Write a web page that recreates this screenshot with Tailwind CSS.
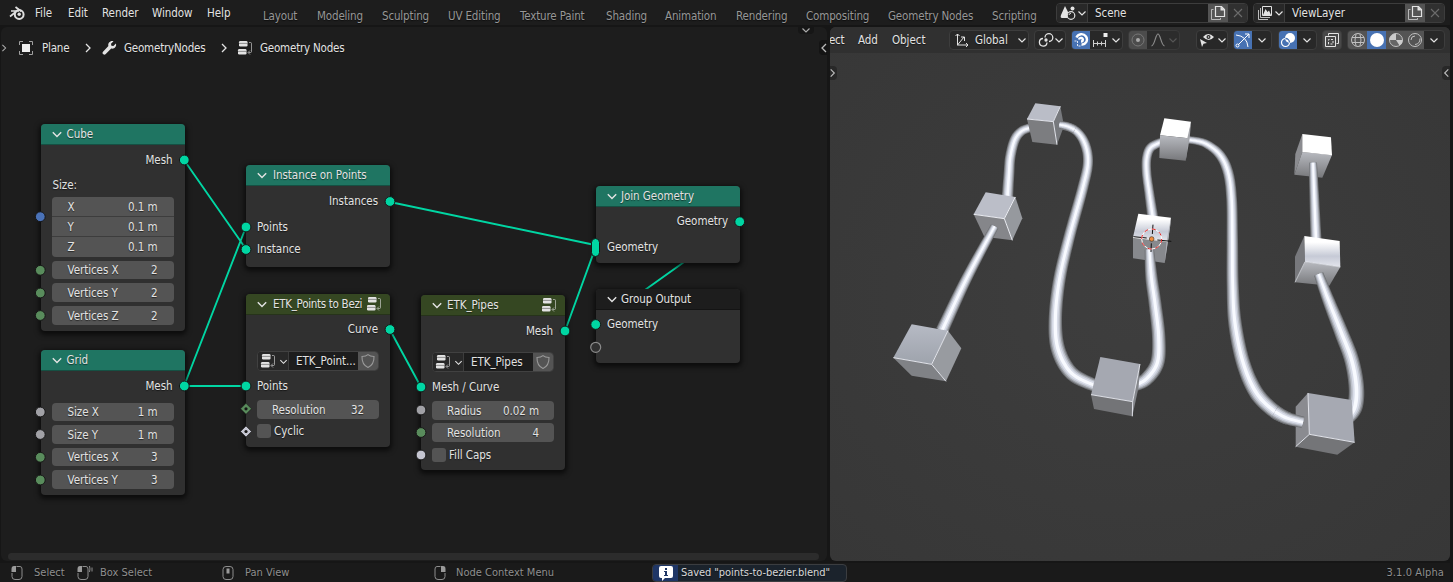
<!DOCTYPE html>
<html lang="en">
<head>
<meta charset="utf-8">
<title>Blender</title>
<script src="https://cdn.jsdelivr.net/npm/@tailwindcss/browser@4"></script>
</head>
<body class="w-[1453px] h-[582px] overflow-hidden bg-[#161616] flex flex-col font-['DejaVu_Sans_Condensed','DejaVu_Sans',sans-serif] text-[11.5px] leading-[18px] tracking-[-0.05px] text-[#e3e3e3] whitespace-nowrap [text-shadow:0_1px_1px_#0008]">
<svg class="hidden">
  <symbol id="chev" viewBox="0 0 10 10"><path d="M1.500 3.500 5 7 8.500 3.500" fill="none" stroke="currentColor" stroke-width="1.200"/></symbol>
  <symbol id="right" viewBox="0 0 10 10"><path d="M3 1 7 5 3 9" fill="none" stroke="currentColor" stroke-width="1.300"/></symbol>
  <symbol id="tree" viewBox="0 0 16 16"><rect x="2" y="1" width="8.500" height="5.500" rx="1.200" fill="currentColor"/><rect x="1" y="9" width="8.500" height="5.500" rx="1.200" fill="currentColor"/><path d="M2 3.400h8.500M1 11.400h8.500" stroke="#555" stroke-width=".6"/><path d="M12 2.500h1.500q1 0 1 1v8q0 1-1 1H11.500M13 10.500l-2 2 2 2" fill="none" stroke="currentColor" opacity=".6"/></symbol>
  <symbol id="shield" viewBox="0 0 16 16"><path d="M8 1.600C6.500 3 4.500 3.500 2 3.500 1.800 9 3.800 12.500 8 14.500c4.200-2 6.200-5.500 6-11-2.500 0-4.500-.5-6-1.900z" fill="none" stroke="#999" stroke-width="1.100"/></symbol>
  <symbol id="copy" viewBox="0 0 16 16"><path d="M5.500 1.500h6l3 3v7h-9z" fill="none" stroke="currentColor" stroke-width="1.200"/><path d="M10.500 1 15 5.500h-4.500z" fill="currentColor"/><path d="M3.500 4.500h-2v10h9v-1.500" fill="none" stroke="currentColor" opacity=".7"/></symbol>
  <symbol id="x" viewBox="0 0 16 16"><path d="m4 4 8 8m0-8-8 8" fill="none" stroke="#6b6b6b" stroke-width="1.100"/></symbol>
  <symbol id="mouse" viewBox="0 0 16 16"><path d="M7.500 1.500H11Q13 1.500 13 4v7.500Q13 14.500 10 14.500H6Q3 14.500 3 11.500V8" fill="none" stroke="#8d8d8d"/><path d="M7 1v6H2.500V4Q2.500 1 5 1z" fill="#9a9a9a"/></symbol>
</svg>

<!-- Top bar -->
<header class="flex h-[25px] shrink-0 bg-[#1d1d1d] w-[1450px]">
  <svg class="ml-[9px] mt-[5px] w-4 h-4 shrink-0" viewBox="0 0 16 16" fill="none" stroke="#dedede"><circle cx="10.200" cy="9.500" r="4.400" stroke-width="2"/><circle cx="10.200" cy="9.300" r="1.700" fill="#dedede" stroke="none"/><path d="M1 11.500 8.500 5.500M2 6h8M6.500 2l6 4.500" stroke-width="1.700"/></svg>
  <nav class="flex ml-[10px] pt-[4px] w-[228px] shrink-0">
    <span class="w-[33px]">File</span><span class="w-[34px]">Edit</span><span class="w-[50px]">Render</span><span class="w-[55px]">Window</span><span>Help</span>
  </nav>
  <nav class="flex pt-[7px] w-[793px] shrink-0 text-[#979797] tracking-[-0.15px]">
    <span class="w-[54px]">Layout</span><span class="w-[65px]">Modeling</span><span class="w-[66px]">Sculpting</span><span class="w-[72px]">UV Editing</span><span class="w-[86px]">Texture Paint</span><span class="w-[59px]">Shading</span><span class="w-[71px]">Animation</span><span class="w-[70px]">Rendering</span><span class="w-[82px]">Compositing</span><span class="w-[104px]">Geometry Nodes</span><span>Scripting</span>
  </nav>
  <div class="flex gap-[5px] mt-[3px]">
    <div class="flex w-[192px] h-[20px] rounded-[4px] border border-[#3d3d3d] bg-[#1d1d1d] overflow-hidden">
      <div class="w-[31px] bg-[#282828] flex items-center border-r border-[#3d3d3d] shrink-0"><svg class="w-[17px] h-4 ml-[3px]" viewBox="0 0 17 16" fill="#e3e3e3"><path d="M5 1 9 9Q8 11 8.500 13H2Q0 13 1 10z"/><circle cx="12.500" cy="3.500" r="2"/><circle cx="11" cy="10.500" r="3.800" fill="#282828" stroke="#e3e3e3" stroke-width="1.200"/><path d="M9 10q.3-1.700 2-1.800" fill="none" stroke="#e3e3e3"/></svg><svg class="w-[10px] h-[10px]"><use href="#chev"/></svg></div>
      <span class="w-[120px] pl-[7px] shrink-0">Scene</span>
      <span class="w-[20px] bg-[#545454] flex items-center justify-center shrink-0"><svg class="w-4 h-4"><use href="#copy"/></svg></span>
      <span class="w-[20px] bg-[#303030] flex items-center justify-center shrink-0"><svg class="w-4 h-4"><use href="#x"/></svg></span>
    </div>
    <div class="flex w-[192px] h-[20px] rounded-[4px] border border-[#3d3d3d] bg-[#1d1d1d] overflow-hidden">
      <div class="w-[31px] bg-[#282828] flex items-center border-r border-[#3d3d3d] shrink-0"><svg class="w-4 h-4 ml-[3px]" viewBox="0 0 16 16" fill="none" stroke="#e3e3e3"><path d="M5.500 1.500h9v9h-9z"/><path d="M3.500 3v9.500H13M1.500 5v9.500H11" opacity=".8"/><path d="m6 10 2.500-6 2 3 1.500-1.500 2 4.500z" fill="#e3e3e3" stroke="none"/></svg><svg class="w-[10px] h-[10px] ml-px"><use href="#chev"/></svg></div>
      <span class="w-[120px] pl-[7px] shrink-0">ViewLayer</span>
      <span class="w-[20px] bg-[#545454] flex items-center justify-center shrink-0"><svg class="w-4 h-4"><use href="#copy"/></svg></span>
      <span class="w-[20px] bg-[#303030] flex items-center justify-center shrink-0"><svg class="w-4 h-4"><use href="#x"/></svg></span>
    </div>
  </div>
</header>

<main class="flex mt-[2px] h-[534px] shrink-0">
  <!-- Node editor; the canvas inside uses window coordinates -->
  <section class="relative w-[826px] ml-px h-[534px] shrink-0 rounded-[6px] bg-[#1d1d1d] overflow-hidden">
    <div class="flex items-center h-[42px] tracking-[-0.2px]">
      <svg class="w-[8px] h-[10px] -ml-px shrink-0 text-[#b0b0b0]"><use href="#right"/></svg>
      <svg class="w-4 h-4 ml-[10px] shrink-0" viewBox="0 0 16 16"><rect x="4" y="4" width="8" height="8" fill="#eee"/><path d="M1.500 5V1.500H5M11 1.500h3.500V5M14.500 11v3.500H11M5 14.500H1.500V11" fill="none" stroke="#a0a0a0"/></svg>
      <span class="ml-[8px] w-[41px]">Plane</span>
      <svg class="w-[10px] h-[10px]"><use href="#right"/></svg>
      <svg class="w-4 h-4 ml-[8px]" viewBox="0 0 16 16" fill="#e3e3e3"><path d="M12.500 1.200 10 3.700l.4 2 2 .4 2.500-2.500c1 3-1.500 5.700-4.700 5L4.500 14.200c-1.500 1.500-4-.8-2.500-2.400L7.400 6C6.500 3 9.500.2 12.500 1.200z"/></svg>
      <span class="ml-[7px] w-[95px]">GeometryNodes</span>
      <svg class="w-[10px] h-[10px]"><use href="#right"/></svg>
      <svg class="w-4 h-4 ml-[8px]"><use href="#tree"/></svg>
      <span class="ml-[7px]">Geometry Nodes</span>
    </div>
    <div class="absolute left-[797px] -top-[1px] w-[16px] h-[8px] rounded-b bg-[#161616] text-[#aaa]"><svg class="w-[10px] h-[10px] ml-[3px] -mt-[1px]"><use href="#chev"/></svg></div>
    <div class="absolute left-[818px] top-[13px] w-[9px] h-[15px] rounded-l bg-[#141414] text-[#bbb]"><svg class="w-[10px] h-[10px] mt-[3px] -scale-x-100"><use href="#right"/></svg></div>
    <div class="absolute left-[7px] top-[526px] w-[811px] h-[7px] rounded-full bg-[#2c2c2c]"></div>

    <div class="absolute -left-px -top-[27px] w-[828px] h-[561px]">
      <svg class="absolute inset-0 w-[828px] h-[561px]" fill="none" stroke="#00d6a3" stroke-width="1.900"><path d="M184 160 246 249M184 386 246 227M184 386H246M390 202 595 245M390 330 421 387M565 331 595 249M740 222 596 325"/></svg>

      <!-- Cube -->
      <article class="absolute left-[40.500px] top-[124px] w-[144px] h-[207px] rounded-[4px] bg-[#303030] shadow-[0_2px_5px_2px_#0009]">
        <h2 class="flex items-center h-[21px] rounded-t-[4px] bg-[#1f7562] border-b border-[#155043] pl-[10px]"><svg class="w-[12px] h-[12px] mr-[4px]"><use href="#chev"/></svg>Cube</h2>
        <div class="flex justify-end mt-[6px] pr-[12px]">Mesh</div>
        <div class="mt-[7px] pl-[12px]">Size:</div>
        <div class="mt-[3px] mx-[11px] flex flex-col gap-px rounded-[4px] overflow-hidden bg-[#3d3d3d]">
          <div class="flex justify-between items-center h-[19px] px-[16px] bg-[#545454]"><span>X</span><span>0.1 m</span></div>
          <div class="flex justify-between items-center h-[19px] px-[16px] bg-[#545454]"><span>Y</span><span>0.1 m</span></div>
          <div class="flex justify-between items-center h-[20px] px-[16px] bg-[#545454]"><span>Z</span><span>0.1 m</span></div>
        </div>
        <div class="flex justify-between items-center h-[18px] mt-[4px] mx-[11px] px-[16px] rounded-[4px] bg-[#545454]"><span>Vertices X</span><span>2</span></div>
        <div class="flex justify-between items-center h-[19px] mt-[4px] mx-[11px] px-[16px] rounded-[4px] bg-[#545454]"><span>Vertices Y</span><span>2</span></div>
        <div class="flex justify-between items-center h-[19px] mt-[4px] mx-[11px] px-[16px] rounded-[4px] bg-[#545454]"><span>Vertices Z</span><span>2</span></div>
      </article>

      <!-- Grid -->
      <article class="absolute left-[40.500px] top-[350px] w-[144px] h-[145px] rounded-[4px] bg-[#303030] shadow-[0_2px_5px_2px_#0009]">
        <h2 class="flex items-center h-[21px] rounded-t-[4px] bg-[#1f7562] border-b border-[#155043] pl-[10px]"><svg class="w-[12px] h-[12px] mr-[4px]"><use href="#chev"/></svg>Grid</h2>
        <div class="flex justify-end mt-[6px] pr-[12px]">Mesh</div>
        <div class="flex justify-between items-center h-[18px] mt-[8px] mx-[11px] px-[16px] rounded-[4px] bg-[#545454]"><span>Size X</span><span>1 m</span></div>
        <div class="flex justify-between items-center h-[19px] mt-[4px] mx-[11px] px-[16px] rounded-[4px] bg-[#545454]"><span>Size Y</span><span>1 m</span></div>
        <div class="flex justify-between items-center h-[18px] mt-[4px] mx-[11px] px-[16px] rounded-[4px] bg-[#545454]"><span>Vertices X</span><span>3</span></div>
        <div class="flex justify-between items-center h-[19px] mt-[4px] mx-[11px] px-[16px] rounded-[4px] bg-[#545454]"><span>Vertices Y</span><span>3</span></div>
      </article>

      <!-- Instance on Points -->
      <article class="absolute left-[246px] top-[165px] w-[144px] h-[102px] rounded-[4px] bg-[#303030] shadow-[0_2px_5px_2px_#0009]">
        <h2 class="flex items-center h-[21px] rounded-t-[4px] bg-[#1f7562] border-b border-[#155043] pl-[10px]"><svg class="w-[12px] h-[12px] mr-[5px]"><use href="#chev"/></svg>Instance on Points</h2>
        <div class="flex justify-end mt-[6px] pr-[12px]">Instances</div>
        <div class="mt-[8px] pl-[11px]">Points</div>
        <div class="mt-[4px] pl-[11px]">Instance</div>
      </article>

      <!-- ETK_Points to Bezier -->
      <article class="absolute left-[246px] top-[294px] w-[144px] h-[153px] rounded-[4px] bg-[#303030] shadow-[0_2px_5px_2px_#0009]">
        <h2 class="flex items-center h-[21px] rounded-t-[4px] bg-[#354722] border-b border-[#26331a] pl-[10px]"><svg class="w-[12px] h-[12px] mr-[5px] shrink-0"><use href="#chev"/></svg><span class="w-[93px] tracking-[-0.3px] shrink-0">ETK_Points to Bezi</span><svg class="w-4 h-4 shrink-0"><use href="#tree"/></svg></h2>
        <div class="flex justify-end mt-[5px] pr-[12px]">Curve</div>
        <div class="flex h-[20px] mt-[13px] mx-[11px] rounded-[4px] border border-[#414141] bg-[#1d1d1d] overflow-hidden">
          <div class="flex items-center w-[31px] bg-[#282828] border-r border-[#3d3d3d] pl-[2px] shrink-0"><svg class="w-4 h-4"><use href="#tree"/></svg><svg class="w-[9px] h-[9px] ml-[3px]"><use href="#chev"/></svg></div>
          <span class="pl-[7px] w-[69px] shrink-0">ETK_Point...</span>
          <span class="flex-1 flex items-center justify-center bg-[#545454]"><svg class="w-4 h-4"><use href="#shield"/></svg></span>
        </div>
        <div class="mt-[6px] pl-[11px]">Points</div>
        <div class="flex justify-between items-center h-[19px] mt-[5px] mx-[11px] px-[15px] rounded-[4px] bg-[#545454]"><span>Resolution</span><span>32</span></div>
        <div class="flex items-center mt-[3px] pl-[11px]"><i class="w-[14px] h-[14px] rounded-[3px] bg-[#545454] mr-[3px]"></i>Cyclic</div>
      </article>

      <!-- ETK_Pipes -->
      <article class="absolute left-[421px] top-[295px] w-[144px] h-[175px] rounded-[4px] bg-[#303030] shadow-[0_2px_5px_2px_#0009]">
        <h2 class="flex items-center h-[21px] rounded-t-[4px] bg-[#354722] border-b border-[#26331a] pl-[10px]"><svg class="w-[12px] h-[12px] mr-[4px] shrink-0"><use href="#chev"/></svg><span class="w-[94px] shrink-0">ETK_Pipes</span><svg class="w-4 h-4 shrink-0"><use href="#tree"/></svg></h2>
        <div class="flex justify-end mt-[6px] pr-[12px]">Mesh</div>
        <div class="flex h-[20px] mt-[12px] mx-[11px] rounded-[4px] border border-[#414141] bg-[#1d1d1d] overflow-hidden">
          <div class="flex items-center w-[31px] bg-[#282828] border-r border-[#3d3d3d] pl-[2px] shrink-0"><svg class="w-4 h-4"><use href="#tree"/></svg><svg class="w-[9px] h-[9px] ml-[3px]"><use href="#chev"/></svg></div>
          <span class="pl-[7px] w-[69px] shrink-0">ETK_Pipes</span>
          <span class="flex-1 flex items-center justify-center bg-[#545454]"><svg class="w-4 h-4"><use href="#shield"/></svg></span>
        </div>
        <div class="mt-[6px] pl-[11px]">Mesh / Curve</div>
        <div class="flex justify-between items-center h-[19px] mt-[5px] mx-[11px] px-[15px] rounded-[4px] bg-[#545454]"><span>Radius</span><span>0.02 m</span></div>
        <div class="flex justify-between items-center h-[19px] mt-[3px] mx-[11px] px-[15px] rounded-[4px] bg-[#545454]"><span>Resolution</span><span>4</span></div>
        <div class="flex items-center mt-[4px] pl-[11px]"><i class="w-[14px] h-[14px] rounded-[3px] bg-[#545454] mr-[3px]"></i>Fill Caps</div>
      </article>

      <!-- Group Output -->
      <article class="absolute left-[596px] top-[289px] w-[144px] h-[74px] rounded-[4px] bg-[#303030] shadow-[0_2px_5px_2px_#0009]">
        <h2 class="flex items-center h-[21px] rounded-t-[4px] bg-[#1d1d1d] border-b border-[#141414] pl-[10px]"><svg class="w-[12px] h-[12px] mr-[3px]"><use href="#chev"/></svg>Group Output</h2>
        <div class="mt-[5px] pl-[11px]">Geometry</div>
      </article>

      <!-- Join Geometry -->
      <article class="absolute left-[596px] top-[186px] w-[144px] h-[77px] rounded-[4px] bg-[#303030] shadow-[0_2px_5px_2px_#0009]">
        <h2 class="flex items-center h-[21px] rounded-t-[4px] bg-[#1f7562] border-b border-[#155043] pl-[10px]"><svg class="w-[12px] h-[12px] mr-[3px]"><use href="#chev"/></svg>Join Geometry</h2>
        <div class="flex justify-end mt-[5px] pr-[12px]">Geometry</div>
        <div class="mt-[8px] pl-[11px]">Geometry</div>
      </article>

      <!-- Sockets -->
      <svg class="absolute inset-0 w-[828px] h-[561px]" stroke="#161616">
        <g fill="#00d6a3"><circle cx="184.300" cy="160" r="4.900"/><circle cx="184.300" cy="386" r="4.900"/><circle cx="246" cy="227" r="4.900"/><circle cx="246" cy="249.500" r="4.900"/><circle cx="390" cy="201.500" r="4.900"/><circle cx="390" cy="329.500" r="4.900"/><circle cx="246" cy="386" r="4.900"/><circle cx="421" cy="387" r="4.900"/><circle cx="565" cy="331" r="4.900"/><circle cx="739.700" cy="221.700" r="4.900"/><circle cx="595.700" cy="324.500" r="4.900"/><rect x="591.500" y="238.500" width="8" height="18" rx="4"/></g>
        <circle cx="40.300" cy="216.700" r="4.900" fill="#4a72b8"/>
        <g fill="#598c5c"><circle cx="40.300" cy="270.300" r="4.900"/><circle cx="40.300" cy="293" r="4.900"/><circle cx="40.300" cy="315.500" r="4.900"/><circle cx="40.300" cy="457.300" r="4.900"/><circle cx="40.300" cy="480" r="4.900"/><circle cx="421" cy="432.500" r="4.900"/></g>
        <g fill="#a1a1a6"><circle cx="40.300" cy="412" r="4.900"/><circle cx="40.300" cy="434.500" r="4.900"/><circle cx="421" cy="410" r="4.900"/></g>
        <circle cx="421" cy="455" r="4.900" fill="#c5c6d1"/>
        <path d="M246 403.300l5.500 5.500-5.500 5.500-5.500-5.500z" fill="#598c5c" stroke-width=".6"/><circle cx="246" cy="408.800" r="1.600" fill="#161616" stroke="none"/>
        <path d="M246 426l5.500 5.500-5.500 5.500-5.500-5.500z" fill="#c5c6d1" stroke-width=".6"/><circle cx="246" cy="431.500" r="1.600" fill="#161616" stroke="none"/>
        <circle cx="595.700" cy="347.300" r="5" fill="#303030" stroke="#8a8a8a" stroke-width="1.200"/>
      </svg>
    </div>
  </section>

  <!-- 3D viewport -->
  <section class="relative ml-[3px] w-[620px] h-[534px] shrink-0 rounded-[6px] overflow-hidden bg-[#3a3a3a] bg-[radial-gradient(ellipse_at_center,#3e3e3e,#373737)]">
    <svg class="absolute left-0 top-0 w-[620px] h-[534px]" viewBox="830 27 620 534">
      <defs>
        <linearGradient id="sheen" x1="0" y1="0" x2="0" y2="1"><stop offset=".2" stop-color="#fff"/><stop offset=".65" stop-color="#c6cad6"/><stop offset="1" stop-color="#e3e5ec"/></linearGradient>
        <linearGradient id="soft" x1="0" y1="0" x2="0" y2="1"><stop offset="0" stop-color="#b6bac4"/><stop offset="1" stop-color="#9ea3ac"/></linearGradient>
        <linearGradient id="face" x1="0" y1="0" x2="0" y2="1"><stop offset="0" stop-color="#b8bac0"/><stop offset="1" stop-color="#77787b"/></linearGradient>
      </defs>
      <g transform="translate(880 90) scale(.33333)" stroke-linejoin="round">
        <g data-pipe="382,325,34 387,250,32 391,200,31 404,150,30 424,124,28 450,113,26"></g>
        <g data-pipe="645,887,38 575,850,42 535,780,43 526,690,40 538,570,37 568,440,34 608,295,32 624,215,30 612,155,29 580,117,26 530,104,24"></g>
        <g><path d="M317 307 406 321 373 386 281 373z" fill="#bbbec8"/><path d="M406 321 427 385 397 451 373 386z" fill="#96999e"/><path d="M281 373 373 386 397 451 313 440z" fill="#85868a"/><path d="M281 373 373 386 406 321M373 386 397 451" fill="none" stroke="#eceef4" stroke-width="3"/></g>
        <g><path d="M466 40 541 49 520 95 441 87z" fill="#babdc7"/><path d="M541 49 552 108 531 164 520 95z" fill="#77797d"/><path d="M441 87 520 95 531 164 457 156z" fill="#7c7d80"/><path d="M441 87 520 95 541 49M520 95 531 164" fill="none" stroke="#e3e5ec" stroke-width="3"/></g>
        <g data-pipe="584,119,26 562,109,25 538,104,22"></g>
        <g data-pipe="186,722,38 260,565,32 344,409,25"></g>
        <g><path d="M95 703 204 722 155 823 40 803z" fill="url(#soft)"/><path d="M204 722 244 775 198 874 155 823z" fill="#989ba0"/><path d="M40 803 155 823 198 874 95 857z" fill="#808286"/><path d="M40 803 155 823 204 722M155 823 198 874" fill="none" stroke="#e3e5ec" stroke-width="3"/></g>
      </g>
      <g transform="translate(1080 90) scale(.33333)" stroke-linejoin="round">
        <g data-pipe="218,380,32 208,310,29 200,250,28 200,205,28 212,173,28 244,156,26"></g>
        <g data-pipe="325,149,22 375,160,25 420,195,29 445,250,31 455,330,32 457,450,34 458,580,36 465,700,40 490,820,42 530,910,44 585,965,42 625,986,38"></g>
        <g><path d="M253 85 333 95 325 145 240 136z" fill="#fff"/><path d="M333 95 329 146 317 212 322 145z" fill="#a3a5aa"/><path d="M240 136 325 145 317 212 238 204z" fill="url(#face)"/></g>
        <g><path d="M175 371 273 383 264 454 159 442z" fill="url(#sheen)"/><path d="M159 442 264 454 254 519 159 505z" fill="#87898d"/><path d="M273 383 271 406 254 519 260 452z" fill="#b0b2b8"/><path d="M159 442 262 454" stroke="#fff" stroke-width="3"/></g>
        <g data-pipe="165,886,36 200,866,41 232,818,42 236,740,40 225,640,38 214,560,36 208,478,28"></g>
        <g><path d="M61 801 180 822 158 935 33 914z" fill="#a5a8b1"/><path d="M180 822 176 890 157 979 158 935z" fill="#83858a"/><path d="M33 914 158 935 157 979 42 957z" fill="#737477"/><path d="M33 914 158 935 180 822M158 935 157 979" fill="none" stroke="#dfe1e8" stroke-width="3"/></g>
        <g><path d="M667 132 667 186 643 254 646 192z" fill="#8b8c90"/><path d="M667 186 756 195 727 263 643 254z" fill="url(#face)"/><path d="M667 132 753 142 756 196 667 186z" fill="#fff"/></g>
        <g data-pipe="708,450,33 702,300,28 699,218,24"></g>
        <g><path d="M673 438 675 515 645 577 645 500z" fill="#77787c"/><path d="M675 515 781 531 748 587 645 577z" fill="url(#face)"/><path d="M673 438 779 453 781 531 675 515z" fill="url(#sheen)"/><path d="M645 577 675 515 781 531" fill="none" stroke="#e6e8ee" stroke-width="2"/></g>
        <g data-pipe="805,985,38 825,950,46 829,890,46 815,810,44 785,730,42 745,630,36 716,552,29"></g>
        <g><path d="M684 909 688 1033 647 1070 647 950z" fill="#8a8b90"/><path d="M688 1033 824 1057 772 1094 647 1070z" fill="#747578"/><path d="M684 909 815 930 824 1057 688 1033z" fill="#a6a9b2"/><path d="M684 909 688 1033 824 1057M688 1033 647 1070" fill="none" stroke="#e3e5ec" stroke-width="3"/></g>
        <g data-pipe="585,965,42 620,984,38 669,997,34"></g>
        <g fill="none"><path d="M160 440 200 444M232 450 274 454M219 404 217 432M214 460 213 486" stroke="#111" stroke-width="3"/><circle cx="215" cy="447" r="30" stroke="#fff" stroke-width="3"/><circle cx="215" cy="447" r="30" stroke="#e02424" stroke-width="3" stroke-dasharray="12 11.500"/><circle cx="215" cy="447" r="7" fill="#f28c3c" stroke="#4b3a25" stroke-width="2"/></g>
      </g>
    </svg>

    <div class="relative flex items-center h-[26px] bg-[#303030] [&>*]:shrink-0">
      <span class="w-[28px] -indent-px tracking-[-0.3px]">ect</span>
      <span class="w-[34px]">Add</span><span class="w-[57px]">Object</span>
      <div class="flex items-center w-[80px] h-[20px] rounded-[4px] border border-[#3d3d3d] bg-[#282828] pl-[4px]"><svg class="w-4 h-4" viewBox="0 0 16 16" fill="none" stroke="#e3e3e3"><path d="M3.500 13V2M1.500 4l2-2 2 2M3 13h11M12 11l2 2-2 2M3.500 13 10 5M7 5h3.500v4"/></svg><span class="ml-[5px] w-[42px]">Global</span><svg class="w-[10px] h-[10px]"><use href="#chev"/></svg></div>
      <div class="flex items-center w-[32px] h-[20px] ml-[5px] rounded-[4px] border border-[#3d3d3d] bg-[#282828] pl-[3px]"><svg class="w-4 h-4" viewBox="0 0 16 16" fill="none" stroke="#e3e3e3" stroke-width="1.300"><path d="M9 10.500A3.800 3.800 0 1 1 5 6.500M7 5.500A3.900 3.900 0 1 1 11 9.500"/><circle cx="8" cy="8" r="1" fill="#e3e3e3"/></svg><svg class="w-[10px] h-[10px]"><use href="#chev"/></svg></div>
      <div class="flex items-center w-[52px] h-[20px] ml-[5px] rounded-[4px] border border-[#3d3d3d] bg-[#282828] overflow-hidden"><span class="flex items-center justify-center w-[18px] h-[18px] bg-[#4772b3] shrink-0"><svg class="w-4 h-4" viewBox="0 0 16 16" fill="none"><path d="M3.500 5.500C5 1.500 10.500 1 13 4.500 15.500 8.500 12.500 13 8.500 12.500M6 7.500C6.500 5 10 5.500 9.800 8 9.700 9 9 9.500 8 9.500" stroke="#fff" stroke-width="2.400"/><path d="M1.500 9h3v5h3" stroke="#dfe6f4" stroke-dasharray="2 1"/></svg></span><svg class="w-4 h-4 ml-[2px] shrink-0" viewBox="0 0 16 16" stroke="#cfcfcf"><path d="M1 11.500h13M1.500 8v7M5.500 9.500v4M9.500 9.500v4M13.500 8v7"/><path d="M11.500 1h4v4h-4z" fill="#eee" stroke="none"/></svg><svg class="w-[10px] h-[10px] ml-[3px] shrink-0"><use href="#chev"/></svg></div>
      <div class="flex items-center w-[52px] h-[20px] ml-[5px] rounded-[4px] border border-[#393939] bg-[#2c2c2c] overflow-hidden"><span class="w-[18px] h-[18px] bg-[#4c4c4c] shrink-0 flex items-center justify-center"><svg class="w-4 h-4" viewBox="0 0 16 16"><circle cx="8" cy="8" r="6" fill="none" stroke="#777"/><circle cx="8" cy="8" r="2" fill="#aaa"/></svg></span><svg class="w-4 h-4 ml-[3px] shrink-0" viewBox="0 0 16 16" fill="none" stroke="#8a8a8a" stroke-width="1.200"><path d="M1.500 14C5 13 5.500 2 8 2s3 11 6.500 12"/></svg><svg class="w-[10px] h-[10px] ml-[2px] text-[#555] shrink-0"><use href="#chev"/></svg></div>
      <div class="flex items-center w-[32px] h-[20px] ml-[16px] rounded-[4px] border border-[#3d3d3d] bg-[#282828] pl-[2px]"><svg class="w-4 h-4" viewBox="0 0 16 16"><path d="M4 5q5-6 11 0-5 6-11 0z" fill="#e3e3e3"/><circle cx="9.500" cy="5" r="2" fill="#282828"/><circle cx="9.500" cy="5" r=".8" fill="#e3e3e3"/><path d="M1 7l7 4-3.500.7L3 15z" fill="#e3e3e3"/></svg><svg class="w-[10px] h-[10px] ml-[2px]"><use href="#chev"/></svg></div>
      <div class="flex items-center w-[39px] h-[20px] ml-[5px] rounded-[4px] border border-[#3d3d3d] bg-[#282828] overflow-hidden"><span class="flex items-center justify-center w-[18px] h-[18px] bg-[#4772b3] shrink-0"><svg class="w-4 h-4" viewBox="0 0 16 16" fill="none" stroke="#fff"><path d="M1 3Q12 4 13 15"/><path d="M3 13 14 2M10 2h4v4" /><circle cx="2.500" cy="13.500" r="1.500"/></svg></span><svg class="w-[10px] h-[10px] ml-[5px]"><use href="#chev"/></svg></div>
      <div class="flex items-center w-[39px] h-[20px] ml-[6px] rounded-[4px] border border-[#3d3d3d] bg-[#282828] overflow-hidden"><span class="flex items-center justify-center w-[18px] h-[18px] bg-[#4772b3] shrink-0"><svg class="w-4 h-4" viewBox="0 0 16 16"><circle cx="10" cy="6" r="5" fill="#fff"/><circle cx="5.500" cy="10.500" r="4" fill="none" stroke="#fff" stroke-width="1.200"/><path d="M5.500 6.500a4 4 0 0 1 4 4" fill="none" stroke="#4772b3" stroke-width="1.300"/></svg></span><svg class="w-[10px] h-[10px] ml-[5px]"><use href="#chev"/></svg></div>
      <div class="flex items-center justify-center w-[20px] h-[20px] ml-[5px] rounded-[4px] border border-[#3d3d3d] bg-[#484848]"><svg class="w-4 h-4" viewBox="0 0 16 16" fill="none" stroke="#e3e3e3"><path d="M4.500 3.500v-2h10v10h-2"/><path d="M1.500 4.500h10v10h-10z"/><path d="M4.500 12V7.500H9V12z" stroke-dasharray="2 1.500"/></svg></div>
      <div class="flex items-center w-[98px] h-[20px] ml-[5px] rounded-[4px] border border-[#3d3d3d] bg-[#282828] overflow-hidden [&>span]:w-[19px] [&>span]:h-[18px] [&>span]:flex [&>span]:items-center [&>span]:justify-center [&>span]:shrink-0 [&>span]:bg-[#545454]">
        <span><svg class="w-4 h-4" viewBox="0 0 16 16" fill="none" stroke="#c0c0c0"><circle cx="8" cy="8" r="6.500"/><path d="M2 5.500h12M2 10.500h12M6 2q-2 6 0 12M10 2q2 6 0 12"/></svg></span>
        <span class="!bg-[#4772b3]"><svg class="w-4 h-4" viewBox="0 0 16 16"><circle cx="8" cy="8" r="7" fill="#fff"/></svg></span>
        <span><svg class="w-4 h-4" viewBox="0 0 16 16"><circle cx="8" cy="8" r="6.500" fill="#666" stroke="#c0c0c0"/><path d="M8 1.500V8H1.500A6.500 6.500 0 0 1 8 1.500zM8 8h6.500q0 4-3 5.500z" fill="#ccc"/></svg></span>
        <span><svg class="w-4 h-4" viewBox="0 0 16 16" fill="none" stroke="#c0c0c0"><circle cx="8" cy="8" r="6.500"/><path d="M4 8q0-4 4-4M8 12.500q5-.5 5-6"/></svg></span>
        <svg class="w-[10px] h-[10px] ml-[5px] shrink-0"><use href="#chev"/></svg>
      </div>
    </div>
    <div class="absolute left-0 top-[39px] w-[7px] h-[14px] rounded-r bg-[#282828] text-[#bbb]"><svg class="w-[9px] h-[10px] -ml-[2px] mt-[2px]"><use href="#right"/></svg></div>
    <div class="absolute right-0 top-[39px] w-[8px] h-[14px] rounded-l bg-[#282828] text-[#bbb]"><svg class="w-[9px] h-[10px] mt-[2px] -scale-x-100"><use href="#right"/></svg></div>
  </section>
</main>

<!-- Status bar -->
<footer class="flex items-center h-[19px] mt-[2px] w-[1450px] bg-[#1a1a1a] text-[#8f8f8f] text-[11px] tracking-normal [&>*]:shrink-0">
  <svg class="w-4 h-4 ml-[9px]"><use href="#mouse"/></svg><span class="ml-[9px] w-[41px]">Select</span>
  <svg class="w-[18px] h-4" viewBox="0 0 18 16"><use href="#mouse" width="16" height="16"/><path d="M14.500 1q1 3 0 6M17 2.500v4" fill="none" stroke="#8d8d8d"/></svg><span class="ml-[7px] w-[119px]">Box Select</span>
  <svg class="w-4 h-4" viewBox="0 0 16 16"><rect x="4" y="1.500" width="10" height="13" rx="3" fill="none" stroke="#8d8d8d"/><rect x="7.500" y="3.500" width="3" height="5" fill="#9a9a9a"/></svg><span class="ml-[10px] w-[187px]">Pan View</span>
  <svg class="w-4 h-4 -scale-x-100"><use href="#mouse"/></svg><span class="ml-[8px] w-[196px]">Node Context Menu</span>
  <div class="flex w-[195px] h-[18px] rounded-[4px] border border-[#3b3d40] bg-[#1b232c] text-[#d8d8d8] overflow-hidden leading-[16px]">
    <span class="w-[25px] bg-[#1f3666] flex items-center justify-center"><svg class="w-[16px] h-[16px]" viewBox="0 0 16 16"><path d="M3 1h10q2 0 2 2v8q0 2-2 2H7l-3 3v-3H3q-2 0-2-2V3q0-2 2-2z" fill="#fff"/><path d="M7 3h2v2H7zM6 6h3v4h1v1H6v-1h1V7H6z" fill="#1f3666"/></svg></span><span class="pl-[3px] tracking-[-0.06px]">Saved "points-to-bezier.blend"</span>
  </div>
  <span class="ml-auto mr-[6px] tracking-[0.1px]">3.1.0 Alpha</span>
</footer>

<script>
// Builds each tube as tapered ribbons along a Catmull-Rom curve through "x,y,width" points.
document.querySelectorAll('[data-pipe]').forEach(g => {
  const p = g.dataset.pipe.split(' ').map(s => s.split(',').map(Number));
  const c = [];
  for (let i = 0; i < p.length - 1; i++) {
    const a = p[Math.max(i - 1, 0)], b = p[i], d = p[i + 1], e = p[Math.min(i + 2, p.length - 1)];
    for (let s = 0; s <= 12; s++) {
      if (s === 12 && i < p.length - 2) continue;
      const t = s / 12;
      c.push([0, 1, 2].map(k => .5 * (2 * b[k] + (d[k] - a[k]) * t + (2 * a[k] - 5 * b[k] + 4 * d[k] - e[k]) * t * t + (3 * b[k] - a[k] - 3 * d[k] + e[k]) * t * t * t)));
    }
  }
  [[.5, '#6d6f73'], [.43, '#94979d'], [.34, '#bcc0ca'], [.24, '#d8dce8'], [.12, '#f8faff']].forEach(([k, col]) => {
    const l = [], r = [];
    c.forEach((q, i) => {
      const u = c[Math.max(i - 1, 0)], v = c[Math.min(i + 1, c.length - 1)];
      const dx = v[0] - u[0], dy = v[1] - u[1], n = Math.hypot(dx, dy) || 1, w = q[2] * k;
      l.push((q[0] - dy / n * w) + ' ' + (q[1] + dx / n * w));
      r.unshift((q[0] + dy / n * w) + ' ' + (q[1] - dx / n * w));
    });
    const path = document.createElementNS('http://www.w3.org/2000/svg', 'path');
    path.setAttribute('d', 'M' + l.concat(r).join('L') + 'z');
    path.setAttribute('fill', col);
    g.appendChild(path);
  });
});
</script>
</body>
</html>
